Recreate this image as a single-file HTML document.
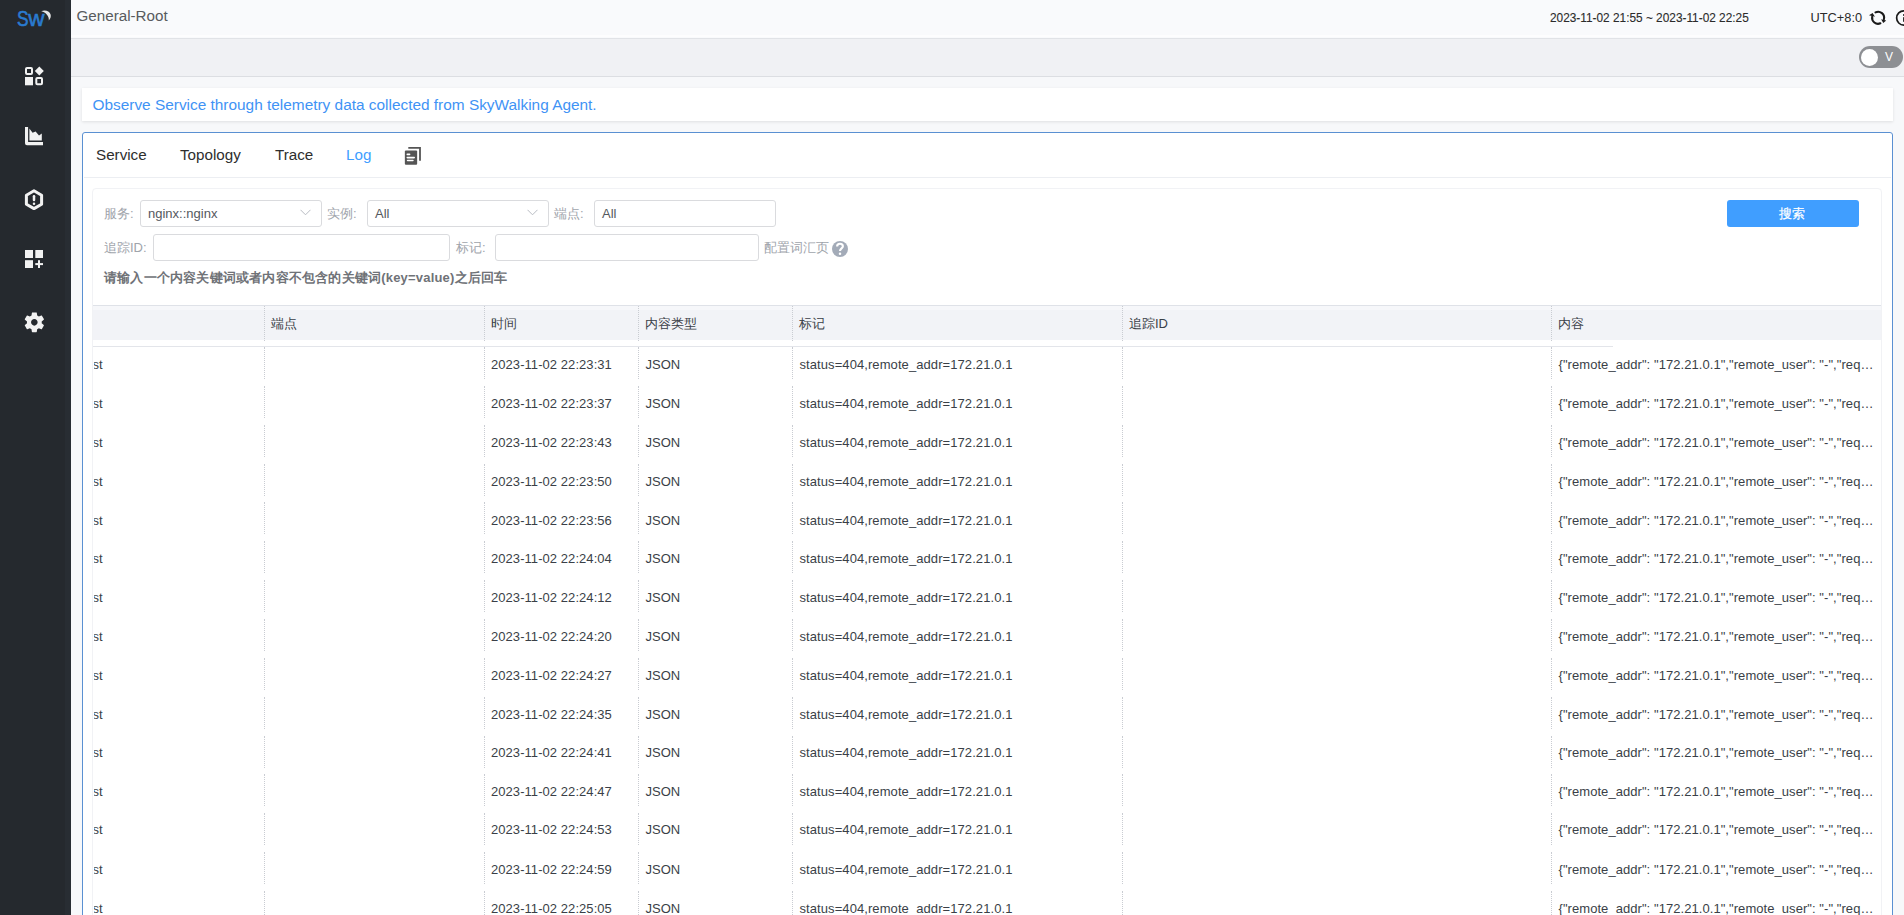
<!DOCTYPE html>
<html><head><meta charset="utf-8">
<style>
*{box-sizing:border-box;margin:0;padding:0}
html,body{width:1904px;height:915px;overflow:hidden;font-family:"Liberation Sans",sans-serif;background:#f7f8fa;position:relative}
.a{position:absolute}
.t{position:absolute;white-space:pre;line-height:1}
.box{position:absolute;background:#fff;border:1px solid #dadbde;border-radius:3px}
.chev{position:absolute;width:11px;height:7px}
.vl{position:absolute;width:0;border-left:1px dotted #c9ccd2}
</style></head><body>
<div class="a" style="left:0;top:0;width:71px;height:915px;background:#25292e"></div>
<div class="a" style="left:65px;top:0;width:6px;height:915px;background:#282d33"></div>
<svg class="a" style="left:0px;top:0px" width="71" height="40" viewBox="0 0 71 40">
<text x="0" y="0" font-family="Liberation Sans" font-size="22.5" fill="#2a7bd0" stroke="#2a7bd0" stroke-width="0.6" transform="translate(16.9 26.4) scale(0.77 1)">S</text><text x="0" y="0" font-family="Liberation Sans" font-size="22.5" fill="#2a7bd0" stroke="#2a7bd0" stroke-width="0.6" transform="translate(28.2 26.4) scale(1.0 1)">w</text>
<path d="M41.2 11.3 C44.5 9.4 49.5 10.6 50.6 14.6 C51.2 16.8 50.4 18.9 48.8 20.5 C49.2 16.2 46 12.4 41.2 11.3 Z" fill="#e6e6e6"/>
</svg>
<svg class="a" style="left:24px;top:66px" width="21" height="21" viewBox="0 0 21 21">
<rect x="2" y="2" width="6" height="6" rx="1" fill="none" stroke="#f2f2f2" stroke-width="2"/>
<path d="M15.3 0.6 L19.8 5.1 L15.3 9.6 L10.8 5.1 Z" fill="#f2f2f2"/>
<rect x="1" y="11" width="8" height="8.3" fill="#f2f2f2"/>
<rect x="12.3" y="12" width="5.7" height="6.3" rx="1" fill="none" stroke="#f2f2f2" stroke-width="2"/>
</svg>
<svg class="a" style="left:24px;top:126.3px" width="21" height="21" viewBox="0 0 21 21">
<path d="M1 1 H4.1 V15.9 H19 V19.2 H3 Q1 19.2 1 17.2 Z" fill="#f2f2f2"/>
<path d="M5.4 2.6 L8.6 6.8 L11.6 5.4 L15 9.6 L17.8 7.6 V14.6 H5.4 Z" fill="#f2f2f2"/>
</svg>
<svg class="a" style="left:23px;top:187.5px" width="22" height="24" viewBox="0 0 22 24">
<path d="M11 2.8 L18.6 7.2 V16.2 L11 20.6 L3.4 16.2 V7.2 Z" fill="none" stroke="#f2f2f2" stroke-width="3" stroke-linejoin="round"/>
<rect x="9.75" y="7.1" width="2.5" height="6.1" rx="1.2" fill="#f2f2f2"/>
<circle cx="11" cy="15.75" r="1.25" fill="#f2f2f2"/>
</svg>
<svg class="a" style="left:24px;top:249px" width="20" height="20" viewBox="0 0 20 20">
<rect x="1" y="1" width="8" height="8" fill="#f2f2f2"/>
<rect x="11.3" y="1" width="7.7" height="8" fill="#f2f2f2"/>
<rect x="1" y="11.2" width="8" height="7.8" fill="#f2f2f2"/>
<rect x="14" y="11.2" width="2" height="7.8" fill="#f2f2f2"/>
<rect x="11.3" y="14.1" width="7.7" height="2" fill="#f2f2f2"/>
</svg>
<svg class="a" style="left:21.65px;top:310.4px" width="24.7" height="24.7" viewBox="0 0 24 24">
<path fill="#f2f2f2" d="M19.14 12.94c.04-.3.06-.61.06-.94 0-.32-.02-.64-.07-.94l2.03-1.58c.18-.14.23-.41.12-.61l-1.92-3.32c-.12-.22-.37-.29-.59-.22l-2.39.96c-.5-.38-1.03-.7-1.62-.94l-.36-2.54c-.04-.24-.24-.41-.48-.41h-3.84c-.24 0-.43.17-.47.41l-.36 2.54c-.59.24-1.130.57-1.62.94l-2.39-.96c-.22-.08-.47 0-.59.22L2.74 8.87c-.12.21-.08.47.12.61l2.03 1.58c-.05.3-.09.63-.09.94s.02.64.07.94l-2.03 1.58c-.18.14-.23.41-.12.61l1.92 3.32c.12.22.37.29.59.22l2.390-.96c.5.38 1.03.7 1.62.94l.36 2.54c.05.24.24.41.48.41h3.84c.24 0 .44-.17.47-.41l.36-2.54c.59-.24 1.13-.56 1.62-.94l2.39.96c.22.08.47 0 .59-.22l1.92-3.32c.12-.22.07-.47-.12-.61l-2.01-1.58zM12 15.2c-1.77 0-3.2-1.43-3.2-3.2s1.43-3.2 3.2-3.2 3.2 1.43 3.2 3.2-1.43 3.2-3.2 3.2z"/>
</svg>
<div class="a" style="left:71px;top:0;width:1833px;height:39px;background:#f9fafc;border-bottom:1px solid #e1e3e7"></div>
<div class="a" style="left:71px;top:35px;width:1833px;height:2px;background:#fdfdfe"></div>
<div class="t" style="left:76.5px;top:8px;font-size:15.2px;color:#585a5e;">General-Root</div>
<div class="t" style="left:1550.3px;top:11px;font-size:13px;color:#2b2b2b;transform:scaleX(0.911);transform-origin:0 0;-webkit-text-stroke:0.12px #2b2b2b">2023-11-02 21:55 ~ 2023-11-02 22:25</div>
<div class="t" style="left:1810.5px;top:12px;font-size:12.8px;color:#2b2b2b;">UTC+8:0</div>
<svg class="a" style="left:1864px;top:4px" width="40" height="28" viewBox="0 0 40 28">
<path d="M11.47 8.41 A6 6 0 0 1 19.9 15.35" fill="none" stroke="#1a1a1a" stroke-width="2.1" stroke-linecap="round"/>
<path d="M16.4 19.34 A6 6 0 0 1 8.19 12.76" fill="none" stroke="#1a1a1a" stroke-width="2.1" stroke-linecap="round"/>
<path d="M17.1 15.2 L22.2 16.6 L19.3 19.0 Z" fill="#1a1a1a"/>
<path d="M5.0 11.2 L8.6 9.0 L10.9 12.7 Z" fill="#1a1a1a"/>
<circle cx="39.8" cy="13.95" r="7.15" fill="none" stroke="#1a1a1a" stroke-width="1.7"/>
<rect x="39.1" y="13.2" width="1.8" height="4.6" fill="#1a1a1a"/>
<rect x="39.1" y="10.1" width="1.8" height="1.8" fill="#1a1a1a"/>
</svg>
<div class="a" style="left:71px;top:39px;width:1833px;height:38px;background:#f0f1f4;border-bottom:1px solid #dcdee2"></div>
<div class="a" style="left:1859px;top:46px;width:44px;height:22px;border-radius:11px;background:#8d8f93"></div>
<div class="a" style="left:1861px;top:48.5px;width:17px;height:17px;border-radius:9px;background:#fff"></div>
<div class="t" style="left:1885px;top:51px;font-size:12px;color:#fff;">V</div>
<div class="a" style="left:82px;top:88px;width:1811px;height:33px;background:#fff;box-shadow:0 1px 3px rgba(0,0,0,.10)"></div>
<div class="t" style="left:92.5px;top:97px;font-size:15.4px;color:#3f93f5;">Observe Service through telemetry data collected from SkyWalking Agent.</div>
<div class="a" style="left:82px;top:132px;width:1811px;height:820px;background:#fff;border:1px solid #5a90d2;border-radius:3px"></div>
<div class="a" style="left:84px;top:177px;width:1807px;height:1px;background:#eceef2"></div>
<div class="t" style="left:96px;top:147px;font-size:15.2px;color:#2e2e2e;">Service</div>
<div class="t" style="left:180px;top:147px;font-size:15.2px;color:#2e2e2e;">Topology</div>
<div class="t" style="left:275px;top:147px;font-size:15.2px;color:#2e2e2e;">Trace</div>
<div class="t" style="left:346px;top:147px;font-size:15.2px;color:#409eff;">Log</div>
<svg class="a" style="left:404px;top:146px" width="18" height="20" viewBox="0 0 18 20">
<path d="M4.3 1 H16.9 V14.7 H15.1 V2.7 H4.3 Z" fill="#555"/>
<rect x="0.85" y="4.5" width="12.3" height="14.3" rx="1" fill="#555"/>
<rect x="2.5" y="7.6" width="3.9" height="1.6" rx=".8" fill="#fff"/>
<rect x="2.5" y="10.7" width="8.5" height="1.7" rx=".8" fill="#fff"/>
<rect x="2.8" y="13.7" width="6.9" height="1.6" rx=".8" fill="#fff"/>
</svg>
<div class="a" style="left:92px;top:188px;width:1790px;height:760px;background:#fff;border:1px solid #f1f2f5;border-radius:4px"></div>
<div class="t" style="left:104px;top:207px;font-size:13px;color:#a0a4ab;">服务:</div>
<div class="box" style="left:140px;top:200px;width:182px;height:27px"></div>
<div class="t" style="left:148px;top:207px;font-size:13px;color:#55585e;">nginx::nginx</div>
<svg class="chev" style="left:300px;top:209px" viewBox="0 0 11 7"><path d="M0.5 0.8 L5.5 5.8 L10.5 0.8" fill="none" stroke="#b8bcc3" stroke-width="1"/></svg>
<div class="t" style="left:327px;top:207px;font-size:13px;color:#a0a4ab;">实例:</div>
<div class="box" style="left:367px;top:200px;width:182px;height:27px"></div>
<div class="t" style="left:375px;top:207px;font-size:13px;color:#55585e;">All</div>
<svg class="chev" style="left:527px;top:209px" viewBox="0 0 11 7"><path d="M0.5 0.8 L5.5 5.8 L10.5 0.8" fill="none" stroke="#b8bcc3" stroke-width="1"/></svg>
<div class="t" style="left:554px;top:207px;font-size:13px;color:#a0a4ab;">端点:</div>
<div class="box" style="left:594px;top:200px;width:182px;height:27px"></div>
<div class="t" style="left:602px;top:207px;font-size:13px;color:#55585e;">All</div>
<div class="t" style="left:104px;top:241px;font-size:13px;color:#a0a4ab;">追踪ID:</div>
<div class="box" style="left:153px;top:234px;width:297px;height:27px"></div>
<div class="t" style="left:456px;top:241px;font-size:13px;color:#a0a4ab;">标记:</div>
<div class="box" style="left:495px;top:234px;width:264px;height:27px"></div>
<div class="t" style="left:764px;top:241px;font-size:13px;color:#a0a4ab;">配置词汇页</div>
<svg class="a" style="left:832px;top:241px" width="16" height="16" viewBox="0 0 16 16">
<circle cx="8" cy="8" r="8" fill="#a3abb8"/>
<path d="M5.1 5.4 C5.1 3.6 6.4 2.7 8 2.7 C9.7 2.7 10.9 3.8 10.9 5.3 C10.9 7.3 8 7.5 8 9.9" fill="none" stroke="#fff" stroke-width="2.1"/><circle cx="8" cy="12.7" r="1.25" fill="#fff"/>
</svg>
<div class="t" style="left:104px;top:271px;font-size:13px;color:#6f7277;font-weight:bold;letter-spacing:0.2px">请输入一个内容关键词或者内容不包含的关键词(key=value)之后回车</div>
<div class="a" style="left:1727px;top:200px;width:132px;height:27px;background:#409eff;border-radius:3px"></div>
<div class="t" style="left:1779.3px;top:206.5px;font-size:13.4px;color:#fff;-webkit-text-stroke:0.2px #fff">搜索</div>
<div class="a" style="left:93px;top:305px;width:1788px;height:35px;background:#f2f3f7;border-top:1px solid #dfe2e8"></div>
<div class="a" style="left:93px;top:306px;width:1788px;height:4px;background:#f6f7fa"></div>
<div class="a" style="left:93px;top:346px;width:1520px;height:1px;background:#e3e5ea"></div>
<div class="vl" style="left:264.0px;top:306px;height:35px"></div>
<div class="t" style="left:271.0px;top:317px;font-size:13px;color:#3a3f47;">端点</div>
<div class="vl" style="left:484.0px;top:306px;height:35px"></div>
<div class="t" style="left:491.0px;top:317px;font-size:13px;color:#3a3f47;">时间</div>
<div class="vl" style="left:638.0px;top:306px;height:35px"></div>
<div class="t" style="left:645.0px;top:317px;font-size:13px;color:#3a3f47;">内容类型</div>
<div class="vl" style="left:792.0px;top:306px;height:35px"></div>
<div class="t" style="left:799.0px;top:317px;font-size:13px;color:#3a3f47;">标记</div>
<div class="vl" style="left:1122.0px;top:306px;height:35px"></div>
<div class="t" style="left:1129.0px;top:317px;font-size:13px;color:#3a3f47;">追踪ID</div>
<div class="vl" style="left:1551.0px;top:306px;height:35px"></div>
<div class="t" style="left:1558.0px;top:317px;font-size:13px;color:#3a3f47;">内容</div>
<div class="a" style="left:93.6px;top:355px;width:20px;height:20px;overflow:hidden"><div class="t" style="left:-1.1px;top:3px;font-size:13px;color:#3a3f47;">st</div>
</div>
<div class="t" style="left:491px;top:358px;font-size:13px;color:#3a3f47;letter-spacing:0.06px">2023-11-02 22:23:31</div>
<div class="t" style="left:645.5px;top:358px;font-size:13px;color:#3a3f47;">JSON</div>
<div class="t" style="left:799.5px;top:358px;font-size:13px;color:#3a3f47;letter-spacing:0.08px">status=404,remote_addr=172.21.0.1</div>
<div class="t" style="left:1558.5px;top:358px;font-size:13px;color:#3a3f47;letter-spacing:0.06px">{"remote_addr": "172.21.0.1","remote_user": "-","req<span style="letter-spacing:0.6px">…</span></div>
<div class="vl" style="left:264.0px;top:347.00px;height:32px"></div>
<div class="vl" style="left:484.0px;top:347.00px;height:32px"></div>
<div class="vl" style="left:638.0px;top:347.00px;height:32px"></div>
<div class="vl" style="left:792.0px;top:347.00px;height:32px"></div>
<div class="vl" style="left:1122.0px;top:347.00px;height:32px"></div>
<div class="vl" style="left:1551.0px;top:347.00px;height:32px"></div>
<div class="a" style="left:93.6px;top:394px;width:20px;height:20px;overflow:hidden"><div class="t" style="left:-1.1px;top:3px;font-size:13px;color:#3a3f47;">st</div>
</div>
<div class="t" style="left:491px;top:397px;font-size:13px;color:#3a3f47;letter-spacing:0.06px">2023-11-02 22:23:37</div>
<div class="t" style="left:645.5px;top:397px;font-size:13px;color:#3a3f47;">JSON</div>
<div class="t" style="left:799.5px;top:397px;font-size:13px;color:#3a3f47;letter-spacing:0.08px">status=404,remote_addr=172.21.0.1</div>
<div class="t" style="left:1558.5px;top:397px;font-size:13px;color:#3a3f47;letter-spacing:0.06px">{"remote_addr": "172.21.0.1","remote_user": "-","req<span style="letter-spacing:0.6px">…</span></div>
<div class="vl" style="left:264.0px;top:385.86px;height:32px"></div>
<div class="vl" style="left:484.0px;top:385.86px;height:32px"></div>
<div class="vl" style="left:638.0px;top:385.86px;height:32px"></div>
<div class="vl" style="left:792.0px;top:385.86px;height:32px"></div>
<div class="vl" style="left:1122.0px;top:385.86px;height:32px"></div>
<div class="vl" style="left:1551.0px;top:385.86px;height:32px"></div>
<div class="a" style="left:93.6px;top:433px;width:20px;height:20px;overflow:hidden"><div class="t" style="left:-1.1px;top:3px;font-size:13px;color:#3a3f47;">st</div>
</div>
<div class="t" style="left:491px;top:436px;font-size:13px;color:#3a3f47;letter-spacing:0.06px">2023-11-02 22:23:43</div>
<div class="t" style="left:645.5px;top:436px;font-size:13px;color:#3a3f47;">JSON</div>
<div class="t" style="left:799.5px;top:436px;font-size:13px;color:#3a3f47;letter-spacing:0.08px">status=404,remote_addr=172.21.0.1</div>
<div class="t" style="left:1558.5px;top:436px;font-size:13px;color:#3a3f47;letter-spacing:0.06px">{"remote_addr": "172.21.0.1","remote_user": "-","req<span style="letter-spacing:0.6px">…</span></div>
<div class="vl" style="left:264.0px;top:424.71px;height:32px"></div>
<div class="vl" style="left:484.0px;top:424.71px;height:32px"></div>
<div class="vl" style="left:638.0px;top:424.71px;height:32px"></div>
<div class="vl" style="left:792.0px;top:424.71px;height:32px"></div>
<div class="vl" style="left:1122.0px;top:424.71px;height:32px"></div>
<div class="vl" style="left:1551.0px;top:424.71px;height:32px"></div>
<div class="a" style="left:93.6px;top:472px;width:20px;height:20px;overflow:hidden"><div class="t" style="left:-1.1px;top:3px;font-size:13px;color:#3a3f47;">st</div>
</div>
<div class="t" style="left:491px;top:475px;font-size:13px;color:#3a3f47;letter-spacing:0.06px">2023-11-02 22:23:50</div>
<div class="t" style="left:645.5px;top:475px;font-size:13px;color:#3a3f47;">JSON</div>
<div class="t" style="left:799.5px;top:475px;font-size:13px;color:#3a3f47;letter-spacing:0.08px">status=404,remote_addr=172.21.0.1</div>
<div class="t" style="left:1558.5px;top:475px;font-size:13px;color:#3a3f47;letter-spacing:0.06px">{"remote_addr": "172.21.0.1","remote_user": "-","req<span style="letter-spacing:0.6px">…</span></div>
<div class="vl" style="left:264.0px;top:463.57px;height:32px"></div>
<div class="vl" style="left:484.0px;top:463.57px;height:32px"></div>
<div class="vl" style="left:638.0px;top:463.57px;height:32px"></div>
<div class="vl" style="left:792.0px;top:463.57px;height:32px"></div>
<div class="vl" style="left:1122.0px;top:463.57px;height:32px"></div>
<div class="vl" style="left:1551.0px;top:463.57px;height:32px"></div>
<div class="a" style="left:93.6px;top:511px;width:20px;height:20px;overflow:hidden"><div class="t" style="left:-1.1px;top:3px;font-size:13px;color:#3a3f47;">st</div>
</div>
<div class="t" style="left:491px;top:514px;font-size:13px;color:#3a3f47;letter-spacing:0.06px">2023-11-02 22:23:56</div>
<div class="t" style="left:645.5px;top:514px;font-size:13px;color:#3a3f47;">JSON</div>
<div class="t" style="left:799.5px;top:514px;font-size:13px;color:#3a3f47;letter-spacing:0.08px">status=404,remote_addr=172.21.0.1</div>
<div class="t" style="left:1558.5px;top:514px;font-size:13px;color:#3a3f47;letter-spacing:0.06px">{"remote_addr": "172.21.0.1","remote_user": "-","req<span style="letter-spacing:0.6px">…</span></div>
<div class="vl" style="left:264.0px;top:502.43px;height:32px"></div>
<div class="vl" style="left:484.0px;top:502.43px;height:32px"></div>
<div class="vl" style="left:638.0px;top:502.43px;height:32px"></div>
<div class="vl" style="left:792.0px;top:502.43px;height:32px"></div>
<div class="vl" style="left:1122.0px;top:502.43px;height:32px"></div>
<div class="vl" style="left:1551.0px;top:502.43px;height:32px"></div>
<div class="a" style="left:93.6px;top:549px;width:20px;height:20px;overflow:hidden"><div class="t" style="left:-1.1px;top:3px;font-size:13px;color:#3a3f47;">st</div>
</div>
<div class="t" style="left:491px;top:552px;font-size:13px;color:#3a3f47;letter-spacing:0.06px">2023-11-02 22:24:04</div>
<div class="t" style="left:645.5px;top:552px;font-size:13px;color:#3a3f47;">JSON</div>
<div class="t" style="left:799.5px;top:552px;font-size:13px;color:#3a3f47;letter-spacing:0.08px">status=404,remote_addr=172.21.0.1</div>
<div class="t" style="left:1558.5px;top:552px;font-size:13px;color:#3a3f47;letter-spacing:0.06px">{"remote_addr": "172.21.0.1","remote_user": "-","req<span style="letter-spacing:0.6px">…</span></div>
<div class="vl" style="left:264.0px;top:541.28px;height:32px"></div>
<div class="vl" style="left:484.0px;top:541.28px;height:32px"></div>
<div class="vl" style="left:638.0px;top:541.28px;height:32px"></div>
<div class="vl" style="left:792.0px;top:541.28px;height:32px"></div>
<div class="vl" style="left:1122.0px;top:541.28px;height:32px"></div>
<div class="vl" style="left:1551.0px;top:541.28px;height:32px"></div>
<div class="a" style="left:93.6px;top:588px;width:20px;height:20px;overflow:hidden"><div class="t" style="left:-1.1px;top:3px;font-size:13px;color:#3a3f47;">st</div>
</div>
<div class="t" style="left:491px;top:591px;font-size:13px;color:#3a3f47;letter-spacing:0.06px">2023-11-02 22:24:12</div>
<div class="t" style="left:645.5px;top:591px;font-size:13px;color:#3a3f47;">JSON</div>
<div class="t" style="left:799.5px;top:591px;font-size:13px;color:#3a3f47;letter-spacing:0.08px">status=404,remote_addr=172.21.0.1</div>
<div class="t" style="left:1558.5px;top:591px;font-size:13px;color:#3a3f47;letter-spacing:0.06px">{"remote_addr": "172.21.0.1","remote_user": "-","req<span style="letter-spacing:0.6px">…</span></div>
<div class="vl" style="left:264.0px;top:580.14px;height:32px"></div>
<div class="vl" style="left:484.0px;top:580.14px;height:32px"></div>
<div class="vl" style="left:638.0px;top:580.14px;height:32px"></div>
<div class="vl" style="left:792.0px;top:580.14px;height:32px"></div>
<div class="vl" style="left:1122.0px;top:580.14px;height:32px"></div>
<div class="vl" style="left:1551.0px;top:580.14px;height:32px"></div>
<div class="a" style="left:93.6px;top:627px;width:20px;height:20px;overflow:hidden"><div class="t" style="left:-1.1px;top:3px;font-size:13px;color:#3a3f47;">st</div>
</div>
<div class="t" style="left:491px;top:630px;font-size:13px;color:#3a3f47;letter-spacing:0.06px">2023-11-02 22:24:20</div>
<div class="t" style="left:645.5px;top:630px;font-size:13px;color:#3a3f47;">JSON</div>
<div class="t" style="left:799.5px;top:630px;font-size:13px;color:#3a3f47;letter-spacing:0.08px">status=404,remote_addr=172.21.0.1</div>
<div class="t" style="left:1558.5px;top:630px;font-size:13px;color:#3a3f47;letter-spacing:0.06px">{"remote_addr": "172.21.0.1","remote_user": "-","req<span style="letter-spacing:0.6px">…</span></div>
<div class="vl" style="left:264.0px;top:619.00px;height:32px"></div>
<div class="vl" style="left:484.0px;top:619.00px;height:32px"></div>
<div class="vl" style="left:638.0px;top:619.00px;height:32px"></div>
<div class="vl" style="left:792.0px;top:619.00px;height:32px"></div>
<div class="vl" style="left:1122.0px;top:619.00px;height:32px"></div>
<div class="vl" style="left:1551.0px;top:619.00px;height:32px"></div>
<div class="a" style="left:93.6px;top:666px;width:20px;height:20px;overflow:hidden"><div class="t" style="left:-1.1px;top:3px;font-size:13px;color:#3a3f47;">st</div>
</div>
<div class="t" style="left:491px;top:669px;font-size:13px;color:#3a3f47;letter-spacing:0.06px">2023-11-02 22:24:27</div>
<div class="t" style="left:645.5px;top:669px;font-size:13px;color:#3a3f47;">JSON</div>
<div class="t" style="left:799.5px;top:669px;font-size:13px;color:#3a3f47;letter-spacing:0.08px">status=404,remote_addr=172.21.0.1</div>
<div class="t" style="left:1558.5px;top:669px;font-size:13px;color:#3a3f47;letter-spacing:0.06px">{"remote_addr": "172.21.0.1","remote_user": "-","req<span style="letter-spacing:0.6px">…</span></div>
<div class="vl" style="left:264.0px;top:657.86px;height:32px"></div>
<div class="vl" style="left:484.0px;top:657.86px;height:32px"></div>
<div class="vl" style="left:638.0px;top:657.86px;height:32px"></div>
<div class="vl" style="left:792.0px;top:657.86px;height:32px"></div>
<div class="vl" style="left:1122.0px;top:657.86px;height:32px"></div>
<div class="vl" style="left:1551.0px;top:657.86px;height:32px"></div>
<div class="a" style="left:93.6px;top:705px;width:20px;height:20px;overflow:hidden"><div class="t" style="left:-1.1px;top:3px;font-size:13px;color:#3a3f47;">st</div>
</div>
<div class="t" style="left:491px;top:708px;font-size:13px;color:#3a3f47;letter-spacing:0.06px">2023-11-02 22:24:35</div>
<div class="t" style="left:645.5px;top:708px;font-size:13px;color:#3a3f47;">JSON</div>
<div class="t" style="left:799.5px;top:708px;font-size:13px;color:#3a3f47;letter-spacing:0.08px">status=404,remote_addr=172.21.0.1</div>
<div class="t" style="left:1558.5px;top:708px;font-size:13px;color:#3a3f47;letter-spacing:0.06px">{"remote_addr": "172.21.0.1","remote_user": "-","req<span style="letter-spacing:0.6px">…</span></div>
<div class="vl" style="left:264.0px;top:696.71px;height:32px"></div>
<div class="vl" style="left:484.0px;top:696.71px;height:32px"></div>
<div class="vl" style="left:638.0px;top:696.71px;height:32px"></div>
<div class="vl" style="left:792.0px;top:696.71px;height:32px"></div>
<div class="vl" style="left:1122.0px;top:696.71px;height:32px"></div>
<div class="vl" style="left:1551.0px;top:696.71px;height:32px"></div>
<div class="a" style="left:93.6px;top:743px;width:20px;height:20px;overflow:hidden"><div class="t" style="left:-1.1px;top:3px;font-size:13px;color:#3a3f47;">st</div>
</div>
<div class="t" style="left:491px;top:746px;font-size:13px;color:#3a3f47;letter-spacing:0.06px">2023-11-02 22:24:41</div>
<div class="t" style="left:645.5px;top:746px;font-size:13px;color:#3a3f47;">JSON</div>
<div class="t" style="left:799.5px;top:746px;font-size:13px;color:#3a3f47;letter-spacing:0.08px">status=404,remote_addr=172.21.0.1</div>
<div class="t" style="left:1558.5px;top:746px;font-size:13px;color:#3a3f47;letter-spacing:0.06px">{"remote_addr": "172.21.0.1","remote_user": "-","req<span style="letter-spacing:0.6px">…</span></div>
<div class="vl" style="left:264.0px;top:735.57px;height:32px"></div>
<div class="vl" style="left:484.0px;top:735.57px;height:32px"></div>
<div class="vl" style="left:638.0px;top:735.57px;height:32px"></div>
<div class="vl" style="left:792.0px;top:735.57px;height:32px"></div>
<div class="vl" style="left:1122.0px;top:735.57px;height:32px"></div>
<div class="vl" style="left:1551.0px;top:735.57px;height:32px"></div>
<div class="a" style="left:93.6px;top:782px;width:20px;height:20px;overflow:hidden"><div class="t" style="left:-1.1px;top:3px;font-size:13px;color:#3a3f47;">st</div>
</div>
<div class="t" style="left:491px;top:785px;font-size:13px;color:#3a3f47;letter-spacing:0.06px">2023-11-02 22:24:47</div>
<div class="t" style="left:645.5px;top:785px;font-size:13px;color:#3a3f47;">JSON</div>
<div class="t" style="left:799.5px;top:785px;font-size:13px;color:#3a3f47;letter-spacing:0.08px">status=404,remote_addr=172.21.0.1</div>
<div class="t" style="left:1558.5px;top:785px;font-size:13px;color:#3a3f47;letter-spacing:0.06px">{"remote_addr": "172.21.0.1","remote_user": "-","req<span style="letter-spacing:0.6px">…</span></div>
<div class="vl" style="left:264.0px;top:774.43px;height:32px"></div>
<div class="vl" style="left:484.0px;top:774.43px;height:32px"></div>
<div class="vl" style="left:638.0px;top:774.43px;height:32px"></div>
<div class="vl" style="left:792.0px;top:774.43px;height:32px"></div>
<div class="vl" style="left:1122.0px;top:774.43px;height:32px"></div>
<div class="vl" style="left:1551.0px;top:774.43px;height:32px"></div>
<div class="a" style="left:93.6px;top:820px;width:20px;height:20px;overflow:hidden"><div class="t" style="left:-1.1px;top:3px;font-size:13px;color:#3a3f47;">st</div>
</div>
<div class="t" style="left:491px;top:823px;font-size:13px;color:#3a3f47;letter-spacing:0.06px">2023-11-02 22:24:53</div>
<div class="t" style="left:645.5px;top:823px;font-size:13px;color:#3a3f47;">JSON</div>
<div class="t" style="left:799.5px;top:823px;font-size:13px;color:#3a3f47;letter-spacing:0.08px">status=404,remote_addr=172.21.0.1</div>
<div class="t" style="left:1558.5px;top:823px;font-size:13px;color:#3a3f47;letter-spacing:0.06px">{"remote_addr": "172.21.0.1","remote_user": "-","req<span style="letter-spacing:0.6px">…</span></div>
<div class="vl" style="left:264.0px;top:813.28px;height:32px"></div>
<div class="vl" style="left:484.0px;top:813.28px;height:32px"></div>
<div class="vl" style="left:638.0px;top:813.28px;height:32px"></div>
<div class="vl" style="left:792.0px;top:813.28px;height:32px"></div>
<div class="vl" style="left:1122.0px;top:813.28px;height:32px"></div>
<div class="vl" style="left:1551.0px;top:813.28px;height:32px"></div>
<div class="a" style="left:93.6px;top:860px;width:20px;height:20px;overflow:hidden"><div class="t" style="left:-1.1px;top:3px;font-size:13px;color:#3a3f47;">st</div>
</div>
<div class="t" style="left:491px;top:863px;font-size:13px;color:#3a3f47;letter-spacing:0.06px">2023-11-02 22:24:59</div>
<div class="t" style="left:645.5px;top:863px;font-size:13px;color:#3a3f47;">JSON</div>
<div class="t" style="left:799.5px;top:863px;font-size:13px;color:#3a3f47;letter-spacing:0.08px">status=404,remote_addr=172.21.0.1</div>
<div class="t" style="left:1558.5px;top:863px;font-size:13px;color:#3a3f47;letter-spacing:0.06px">{"remote_addr": "172.21.0.1","remote_user": "-","req<span style="letter-spacing:0.6px">…</span></div>
<div class="vl" style="left:264.0px;top:852.14px;height:32px"></div>
<div class="vl" style="left:484.0px;top:852.14px;height:32px"></div>
<div class="vl" style="left:638.0px;top:852.14px;height:32px"></div>
<div class="vl" style="left:792.0px;top:852.14px;height:32px"></div>
<div class="vl" style="left:1122.0px;top:852.14px;height:32px"></div>
<div class="vl" style="left:1551.0px;top:852.14px;height:32px"></div>
<div class="a" style="left:93.6px;top:899px;width:20px;height:20px;overflow:hidden"><div class="t" style="left:-1.1px;top:3px;font-size:13px;color:#3a3f47;">st</div>
</div>
<div class="t" style="left:491px;top:902px;font-size:13px;color:#3a3f47;letter-spacing:0.06px">2023-11-02 22:25:05</div>
<div class="t" style="left:645.5px;top:902px;font-size:13px;color:#3a3f47;">JSON</div>
<div class="t" style="left:799.5px;top:902px;font-size:13px;color:#3a3f47;letter-spacing:0.08px">status=404,remote_addr=172.21.0.1</div>
<div class="t" style="left:1558.5px;top:902px;font-size:13px;color:#3a3f47;letter-spacing:0.06px">{"remote_addr": "172.21.0.1","remote_user": "-","req<span style="letter-spacing:0.6px">…</span></div>
<div class="vl" style="left:264.0px;top:891.00px;height:32px"></div>
<div class="vl" style="left:484.0px;top:891.00px;height:32px"></div>
<div class="vl" style="left:638.0px;top:891.00px;height:32px"></div>
<div class="vl" style="left:792.0px;top:891.00px;height:32px"></div>
<div class="vl" style="left:1122.0px;top:891.00px;height:32px"></div>
<div class="vl" style="left:1551.0px;top:891.00px;height:32px"></div>
</body></html>
